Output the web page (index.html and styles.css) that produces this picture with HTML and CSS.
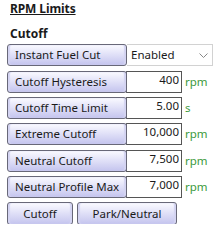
FILE: index.html
```html
<!DOCTYPE html>
<html lang="en">
<head>
    <meta charset="UTF-8">
    <title>RPM Limits</title>
    <link rel="stylesheet" href="styles.css">
</head>
<body>
    <div class="panel">
        <div class="panel-title">RPM Limits</div>
        <div class="group-title">Cutoff</div>

        <div class="row first">
            <div class="label-btn">Instant Fuel Cut</div>
            <div class="select">
                <span>Enabled</span>
                <svg class="chevron" width="9" height="6" viewBox="0 0 9 6"><path d="M0.5 0.5 L4.5 4.5 L8.5 0.5" fill="none" stroke="#888" stroke-width="1"/></svg>
            </div>
        </div>

        <div class="group">
            <div class="row">
                <div class="label-btn">Cutoff Hysteresis</div>
                <div class="field">400</div>
                <div class="unit">rpm</div>
            </div>
            <div class="row">
                <div class="label-btn">Cutoff Time Limit</div>
                <div class="field">5.00</div>
                <div class="unit">s</div>
            </div>
            <div class="row">
                <div class="label-btn">Extreme Cutoff</div>
                <div class="field">10,000</div>
                <div class="unit">rpm</div>
            </div>
        </div>

        <div class="group">
            <div class="row">
                <div class="label-btn">Neutral Cutoff</div>
                <div class="field">7,500</div>
                <div class="unit">rpm</div>
            </div>
            <div class="row">
                <div class="label-btn">Neutral Profile Max</div>
                <div class="field">7,000</div>
                <div class="unit">rpm</div>
            </div>
            <div class="row">
                <button class="btn btn-cutoff">Cutoff</button>
                <button class="btn btn-park">Park/Neutral</button>
            </div>
        </div>
    </div>
</body>
</html>
```

FILE: styles.css
```css
* {
    margin: 0;
    padding: 0;
    box-sizing: border-box;
}
body {
    font-family: 'Noto Sans', 'Open Sans', sans-serif;
    font-size: 11.5px;
    color: #1a1a1a;
    background: #ffffff;
}
.panel {
    padding: 1px 0 0 7px;
}
.panel-title {
    font-weight: 700;
    font-size: 12px;
    text-decoration: underline;
    margin-left: 3px;
    line-height: 16px;
    letter-spacing: -0.1px;
}
.group-title {
    font-weight: 700;
    font-size: 12px;
    margin: 8px 0 0 3px;
    line-height: 18px;
}
.row {
    display: flex;
    align-items: flex-start;
    height: 22px;
    margin-top: 4px;
}
.row.first {
    margin-top: 1px;
}
.group {
    margin-top: 5px;
}
.label-btn,
.btn {
    height: 22px;
    border: 1px solid #686878;
    border-radius: 3px;
    background: linear-gradient(to bottom, #fafaff 0%, #e2e2f8 45%, #c4c4ee 100%);
    box-shadow: inset 2px 0 1px #d4d4f2, inset -2px 0 1px #d4d4f2;
    font-family: inherit;
    font-size: inherit;
    color: #1a1a1a;
    line-height: 19px;
}
.label-btn {
    width: 120px;
    padding-left: 7px;
    white-space: nowrap;
}
.select {
    width: 86px;
    height: 22px;
    border: 1px solid #d2d2d2;
    border-left: none;
    display: flex;
    align-items: center;
    justify-content: space-between;
    padding: 0 4px 1px 4px;
}
.chevron {
    margin-top: 2px;
}
.field {
    width: 56px;
    height: 22px;
    border: 1px solid #555555;
    border-left: 1px solid #686878;
    margin-left: -1px;
    background: #ffffff;
    text-align: right;
    padding-right: 2px;
    line-height: 16px;
}
.unit {
    color: #3c9a3c;
    margin-left: 3px;
    line-height: 21px;
}
.btn {
    height: 23px;
    text-align: center;
    cursor: pointer;
}
.btn-cutoff {
    width: 66px;
}
.btn-park {
    width: 100px;
    margin-left: 4px;
}
```
